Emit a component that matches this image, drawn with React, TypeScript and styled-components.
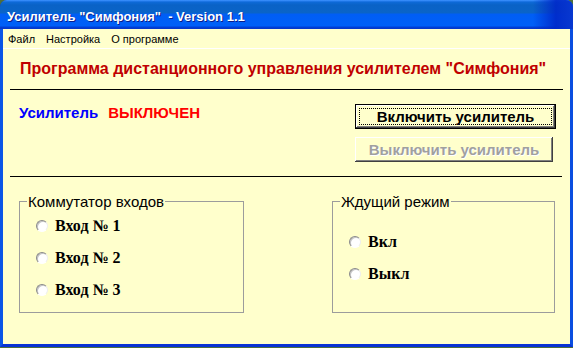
import React from "react";
import styled, { createGlobalStyle } from "styled-components";

const GlobalStyle = createGlobalStyle`
  html, body {
    margin: 0;
    padding: 0;
    background: #4f6f3a;
  }
  body {
    font-family: "Liberation Sans", Arial, sans-serif;
  }
`;

const Window = styled.div`
  width: 573px;
  height: 347px;
  display: flex;
  flex-direction: column;
  background: #0831d9;
  border-radius: 7px 7px 0 0;
  overflow: hidden;
`;

const TitleBar = styled.div`
  height: 29px;
  flex: none;
  display: flex;
  align-items: center;
  padding-left: 7px;
  box-sizing: border-box;
  background:
    linear-gradient(to right, rgba(0, 40, 200, 0) 93%, rgba(0, 40, 200, 0.9) 97%, #0838d0 100%),
    linear-gradient(
      to bottom,
      #3d95ff 0px,
      #2a7ef0 1px,
      #0d6ad8 2px,
      #0a62c6 5px,
      #0a64c8 13px,
      #005ef5 14px,
      #0060f8 26px,
      #0040d8 27px,
      #0836c6 29px
    );
`;

const TitleText = styled.span`
  color: #fff;
  font-family: "Liberation Sans", Arial, sans-serif;
  font-weight: bold;
  font-size: 13px;
  white-space: pre;
  text-shadow: 1px 1px 0 #0a1e8c;
  margin-top: 3px;
`;

const Frame = styled.div`
  flex: 1;
  display: flex;
  border-left: 3px solid #0a55e6;
  border-right: 3px solid #0a4ee0;
  border-bottom: 3px solid #0832d4;
  box-shadow: inset 1px 0 0 #0b4ad8;
`;

const Client = styled.div`
  flex: 1;
  display: flex;
  flex-direction: column;
  background: #ffffcc;
`;

const MenuBar = styled.div`
  height: 19px;
  flex: none;
  display: flex;
  align-items: center;
  border-bottom: 1px solid #ffffff;
  padding-left: 5px;
`;

const MenuItem = styled.span`
  font-family: "Liberation Sans", Tahoma, sans-serif;
  font-size: 11px;
  color: #000;
  padding: 0 6px 0 0;
  margin-right: 5px;
`;

const Heading = styled.div`
  padding: 10px 0 0 17px;
  height: 19px;
  line-height: 19px;
  font-family: "Liberation Sans", Arial, sans-serif;
  font-weight: bold;
  font-size: 16px;
  color: #c00000;
  white-space: pre;
`;

const Rule = styled.div<{ $top: number; $width: number }>`
  margin: ${(p) => p.$top}px 0 0 7px;
  width: ${(p) => p.$width}px;
  height: 1px;
  background: #000;
  flex: none;
`;

const StatusRow = styled.div`
  display: flex;
  justify-content: space-between;
  padding: 14px 14px 0 16px;
`;

const Status = styled.div`
  display: flex;
  gap: 10px;
  height: 18px;
  line-height: 18px;
  font-family: "Liberation Sans", Arial, sans-serif;
  font-weight: bold;
  font-size: 15px;
`;

const StatusPart = styled.span<{ $color: string }>`
  color: ${(p) => p.$color};
`;

const ButtonColumn = styled.div`
  display: flex;
  flex-direction: column;
  gap: 8px;
`;

const Button = styled.button<{ $default?: boolean; $width: number }>`
  position: relative;
  width: ${(p) => p.$width}px;
  height: 25px;
  padding: 0;
  margin: 0;
  background: #ffffcc;
  border: ${(p) => (p.$default ? "1px solid #000" : "none")};
  box-sizing: border-box;
  box-shadow:
    inset -1px -1px 0 #404040,
    inset 1px 1px 0 #ffffff,
    inset -2px -2px 0 #808080,
    inset 2px 2px 0 #ffffcc;
  font-family: "Liberation Sans", Tahoma, sans-serif;
  font-weight: bold;
  font-size: 15px;
  color: #000;
  cursor: default;

  &:disabled {
    color: #a0a0a0;
    text-shadow: 1px 1px 0 #ffffff;
  }

  ${(p) =>
    p.$default &&
    `
    &::after {
      content: "";
      position: absolute;
      inset: 3px;
      border: 1px dotted #000;
    }
  `}
`;

const GroupRow = styled.div`
  display: flex;
  gap: 88px;
  padding: 16px 0 0 16px;
`;

const GroupBox = styled.fieldset<{ $width: number; $pad: string }>`
  width: ${(p) => p.$width}px;
  box-sizing: border-box;
  margin: 0;
  padding: ${(p) => p.$pad};
  border: 1px solid #9c9c9c;
  display: flex;
  flex-direction: column;
`;

const Legend = styled.legend`
  margin-left: 7px;
  padding: 0 1px;
  font-family: "Liberation Sans", Arial, sans-serif;
  font-size: 15px;
  line-height: 17px;
  color: #000;
`;

const Option = styled.label`
  display: flex;
  align-items: center;
  height: 32px;
  padding-left: 16px;
  gap: 7px;
  font-family: "Liberation Serif", "Times New Roman", serif;
  font-weight: bold;
  font-size: 16px;
  color: #000;
`;

const Radio = styled.span`
  width: 12px;
  height: 12px;
  box-sizing: border-box;
  border-radius: 50%;
  border: 1px solid;
  border-color: #8a8a8a #eeeeee #ffffff #8a8a8a;
  background: #ffffff;
  box-shadow: inset 1px 1px 0 #c4c4c4;
  flex: none;
`;

const inputs = ["Вход № 1", "Вход № 2", "Вход № 3"];
const standby = ["Вкл", "Выкл"];

export default function App() {
  return (
    <>
      <GlobalStyle />
      <Window>
        <TitleBar>
          <TitleText>{'Усилитель "Симфония"  - Version 1.1'}</TitleText>
        </TitleBar>
        <Frame>
          <Client>
            <MenuBar>
              <MenuItem>Файл</MenuItem>
              <MenuItem>Настройка</MenuItem>
              <MenuItem>О программе</MenuItem>
            </MenuBar>
            <Heading>{'Программа дистанционного управления усилителем "Симфония"'}</Heading>
            <Rule $top={11} $width={553} />
            <StatusRow>
              <Status>
                <StatusPart $color="#0000ff">Усилитель</StatusPart>
                <StatusPart $color="#ff0000">ВЫКЛЮЧЕН</StatusPart>
              </Status>
              <ButtonColumn>
                <Button $default $width={201}>Включить усилитель</Button>
                <Button disabled $width={198}>Выключить усилитель</Button>
              </ButtonColumn>
            </StatusRow>
            <Rule $top={14} $width={552} />
            <GroupRow>
              <GroupBox $width={225} $pad="0 0 6px">
                <Legend>Коммутатор входов</Legend>
                {inputs.map((t) => (
                  <Option key={t}>
                    <Radio />
                    {t}
                  </Option>
                ))}
              </GroupBox>
              <GroupBox $width={223} $pad="16px 0 22px">
                <Legend>Ждущий режим</Legend>
                {standby.map((t) => (
                  <Option key={t}>
                    <Radio />
                    {t}
                  </Option>
                ))}
              </GroupBox>
            </GroupRow>
          </Client>
        </Frame>
      </Window>
    </>
  );
}
